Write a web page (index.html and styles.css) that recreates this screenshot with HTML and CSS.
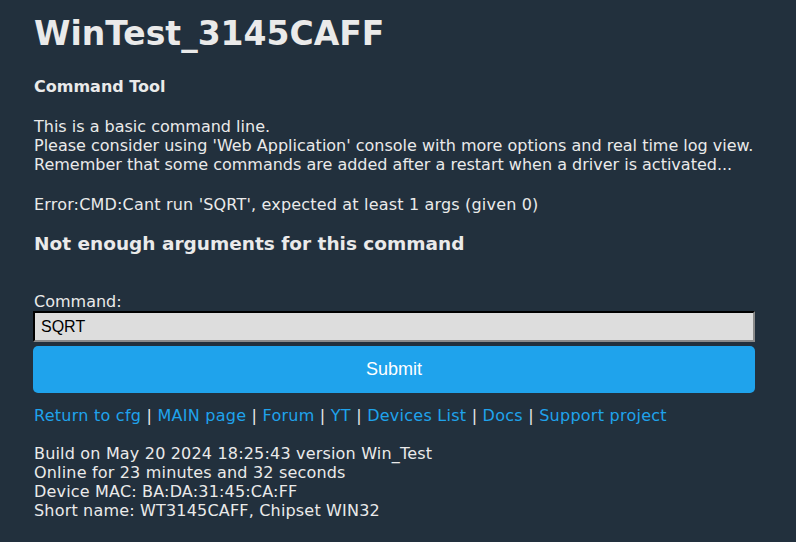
FILE: index.html
```html
<!DOCTYPE html>
<html>
<head>
<meta charset="utf-8">
<title>WinTest_3145CAFF</title>
<link rel="stylesheet" href="styles.css">
</head>
<body>
<div class="page">
  <h1 class="title">WinTest_3145CAFF</h1>
  <h4 class="subtitle">Command Tool</h4>
  <p class="text">This is a basic command line.<br>Please consider using 'Web Application' console with more options and real time log view.<br>Remember that some commands are added after a restart when a driver is activated...</p>
  <p class="text error">Error:CMD:Cant run 'SQRT', expected at least 1 args (given 0)</p>
  <h3 class="result">Not enough arguments for this command</h3>
  <form class="form">
    <label class="label" for="cmd">Command:</label>
    <input class="input" id="cmd" type="text" value="SQRT">
    <button class="submit" type="button">Submit</button>
  </form>
  <div class="links">
    <a href="#">Return to cfg</a> | <a href="#">MAIN page</a> | <a href="#">Forum</a> | <a href="#">YT</a> | <a href="#">Devices List</a> | <a href="#">Docs</a> | <a href="#">Support project</a>
  </div>
  <p class="info">Build on May 20 2024 18:25:43 version Win_Test<br>Online for 23 minutes and 32 seconds<br>Device MAC: BA:DA:31:45:CA:FF<br>Short name: WT3145CAFF, Chipset WIN32</p>
</div>
</body>
</html>
```
FILE: styles.css
```css
html, body {
  margin: 0;
  padding: 0;
  background: #22303d;
}
body {
  font-family: "DejaVu Sans", sans-serif;
  font-size: 16px;
  line-height: 19px;
  color: #eaeaea;
}
.page {
  width: 722px;
  margin-left: 33px;
  padding-top: 14px;
}
.title {
  font-size: 33px;
  line-height: 40px;
  font-weight: bold;
  margin: 0 0 0 1px;
}
.subtitle {
  font-size: 16px;
  font-weight: bold;
  margin: 23px 0 0 1px;
}
.text {
  margin: 21px 0 0 1px;
}
.error {
  letter-spacing: 0.18px;
}
.result {
  font-size: 18.5px;
  line-height: 22px;
  font-weight: bold;
  margin: 19px 0 0 1px;
}
.form {
  margin-top: 37px;
  display: flex;
  flex-direction: column;
}
.label {
  margin-left: 1px;
  line-height: 19px;
}
.input {
  box-sizing: border-box;
  width: 100%;
  height: 31px;
  margin: 0;
  padding: 2px 6px;
  border: 2px inset #777;
  border-top-color: #1a1a1a;
  border-left-color: #1a1a1a;
  border-right-color: #8a8a8a;
  border-bottom-color: #8a8a8a;
  background: #dddddd;
  color: #000;
  font-family: "Liberation Sans", Arial, sans-serif;
  font-size: 16px;
}
.submit {
  margin-top: 4px;
  width: 100%;
  height: 47px;
  border: 0;
  border-radius: 5px;
  background: #1fa3ec;
  color: #fff;
  font-family: "Liberation Sans", Arial, sans-serif;
  font-size: 18px;
}
.links {
  margin: 13px 0 0 1px;
  letter-spacing: 0.25px;
}
.links a {
  color: #1fa3ec;
  text-decoration: none;
}
.info {
  margin: 19px 0 0 1px;
  letter-spacing: 0.18px;
}
```
